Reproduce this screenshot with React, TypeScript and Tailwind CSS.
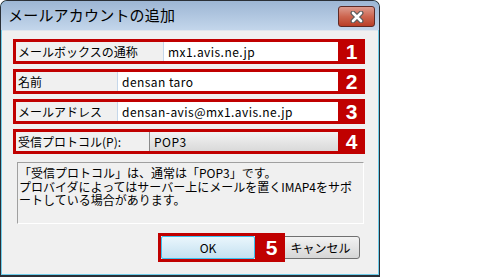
import React from "react";

const jp = "font-['Noto_Sans_CJK_JP','Liberation_Sans',sans-serif]";

function NumTab({ n }: { n: string }) {
  return (
    <span className="w-[27px] self-stretch bg-[#c00000] flex items-center justify-center text-white text-[21px] leading-none font-black font-['Liberation_Sans',sans-serif]">
      {n}
    </span>
  );
}

function Row({
  label,
  labelW,
  n,
  children,
}: {
  label: string;
  labelW: string;
  n: string;
  children: React.ReactNode;
}) {
  return (
    <div className="flex h-[25px] border-[3px] border-r-0 border-[#c00000]">
      <div className={`${labelW} shrink-0 flex items-center pl-[2px] text-[12px] text-black bg-[#f0f0f0]`}>
        {label}
      </div>
      <div className="flex-1 flex">{children}</div>
      <NumTab n={n} />
    </div>
  );
}

function TextField({ value }: { value: string }) {
  return (
    <div className="flex-1 bg-white border-l border-[#c5d7ea] flex items-center pl-[4px] text-[12px] tracking-[0.45px] text-black">
      {value}
    </div>
  );
}

function CloseX() {
  return (
    <svg width="16" height="12" viewBox="0 0 16 12">
      <path d="M4 2 L12 10 M12 2 L4 10" stroke="#5b5b5b" strokeWidth="5" strokeLinecap="round" />
      <path d="M4 2 L12 10 M12 2 L4 10" stroke="#ffffff" strokeWidth="2.6" strokeLinecap="round" />
    </svg>
  );
}

export default function App() {
  return (
    <div className={`w-[500px] h-[279px] bg-white overflow-hidden ${jp}`}>
      <div className="w-[380px] h-[277px] border border-b-2 border-[#2a2f36] rounded-t-[7px] overflow-hidden flex flex-col bg-[#6fcdea]">
        {/* title bar */}
        <div className="h-[29px] shrink-0 bg-gradient-to-b from-[#9db6d4] to-[#c3d6eb] flex items-center pl-[7px] pr-[4px]">
          <span className="text-[15px] text-black tracking-[0.2px]">メールアカウントの追加</span>
          <button className="ml-auto mt-[2px] w-[37px] h-[21px] rounded-[3px] border border-[#5e2a25] bg-gradient-to-b from-[#dc9b8e] via-[#cd6650] to-[#b93e26] flex items-center justify-center">
            <CloseX />
          </button>
        </div>

        {/* body */}
        <div className="flex-1 mx-[1px] mb-[1px] bg-[#f0f0f0] border-t border-[#dfe6ee] pt-[8px] pl-[11px] pr-[13px]">
          <div className="flex flex-col gap-[5px]">
            <Row label="メールボックスの通称" labelW="w-[147px]" n="1">
              <TextField value="mx1.avis.ne.jp" />
            </Row>
            <Row label="名前" labelW="w-[101px]" n="2">
              <TextField value="densan taro" />
            </Row>
            <Row label="メールアドレス" labelW="w-[101px]" n="3">
              <TextField value="densan-avis@mx1.avis.ne.jp" />
            </Row>
            <Row label="受信プロトコル(P):" labelW="w-[133px]" n="4">
              <div className="flex-1 bg-gradient-to-b from-[#f3f3f3] to-[#d9d9d9] border-l border-[#8a8a8a] flex items-center pl-[4px] text-[12px] tracking-[0.45px] text-black">
                POP3
              </div>
            </Row>
          </div>

          <div className="mt-[8px] ml-[4px] mr-[1px] h-[62px] border border-t-[#a0a0a0] border-l-[#a0a0a0] border-r-white border-b-white pl-[1px] pt-[3px] text-[12px] leading-[13.5px] text-black">
            <p>「受信プロトコル」は、通常は「POP3」です。</p>
            <p>プロバイダによってはサーバー上にメールを置くIMAP4をサポ</p>
            <p>ートしている場合があります。</p>
          </div>

          <div className="mt-[9px] flex items-center pl-[145px]">
            <div className="flex h-[29px] relative z-10">
              <div className="w-[100px] border-[3px] border-[#c00000] flex">
                <button className="flex-1 border border-[#3cc0ef] rounded-[2px] bg-gradient-to-b from-[#eaf6fc] to-[#c4e1f1] text-[12px] text-black">
                  OK
                </button>
              </div>
              <NumTab n="5" />
            </div>
            <button className="ml-[-20px] w-[95px] h-[23px] rounded-[3px] border border-[#707070] bg-gradient-to-b from-[#f2f2f2] to-[#d6d6d6] text-[12px] text-black pl-[16px]">
              キャンセル
            </button>
          </div>
        </div>
      </div>
    </div>
  );
}
